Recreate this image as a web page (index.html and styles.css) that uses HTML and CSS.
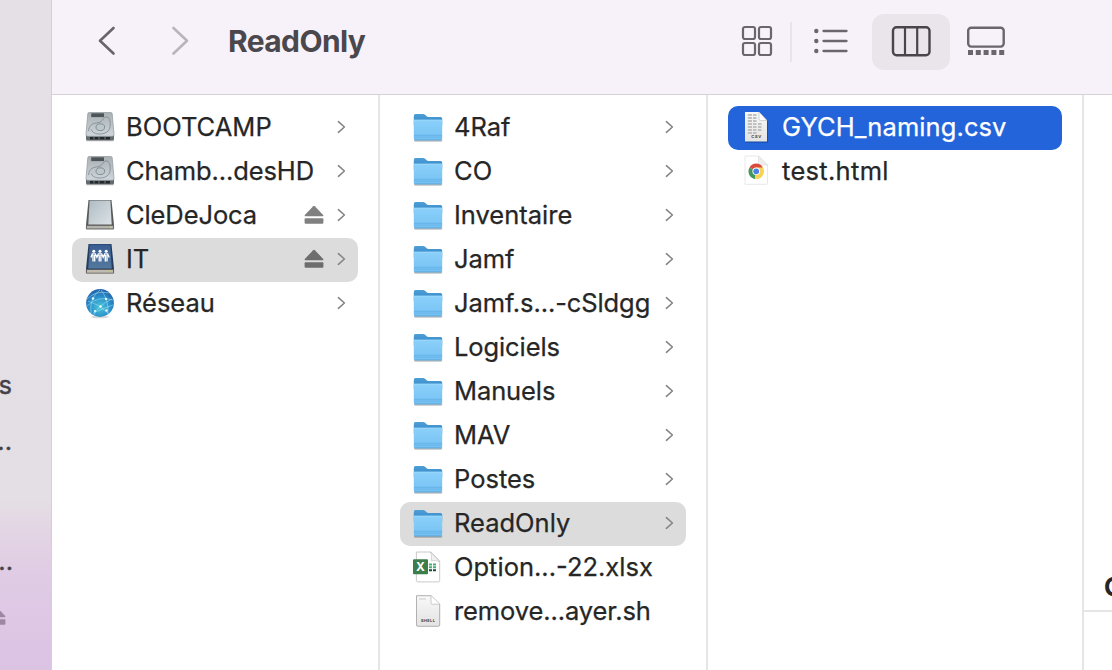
FILE: index.html
```html
<!DOCTYPE html>
<html lang="fr">
<head>
<meta charset="utf-8">
<title>ReadOnly</title>
<link rel="stylesheet" href="styles.css">
</head>
<body>
<svg class="defs" width="0" height="0" aria-hidden="true">
  <defs>
    <linearGradient id="gMetal" x1="0" y1="0" x2="0" y2="1"><stop offset="0" stop-color="#a9b1b5"/><stop offset="1" stop-color="#cfd7dc"/></linearGradient>
    <linearGradient id="gPlate" x1="0" y1="0" x2="1" y2="1"><stop offset="0" stop-color="#aebbc2"/><stop offset="1" stop-color="#dde3e8"/></linearGradient>
    <linearGradient id="gBlue" x1="0" y1="0" x2="0" y2="1"><stop offset="0" stop-color="#385c91"/><stop offset="1" stop-color="#54799f"/></linearGradient>
    <linearGradient id="gTab" x1="0" y1="0" x2="0" y2="1"><stop offset="0" stop-color="#4d9fd8"/><stop offset="1" stop-color="#3481c2"/></linearGradient>
    <linearGradient id="gFolder" x1="0" y1="0" x2="0" y2="1"><stop offset="0" stop-color="#8bd0fa"/><stop offset="1" stop-color="#75c1f3"/></linearGradient>
    <linearGradient id="gPaper" x1="0" y1="0" x2="0" y2="1"><stop offset="0" stop-color="#f8f8f8"/><stop offset="1" stop-color="#e3e3e3"/></linearGradient>
    <radialGradient id="gGlobe" cx=".5" cy=".65" r=".6"><stop offset="0" stop-color="#4cc3d8"/><stop offset=".65" stop-color="#2a8ecb"/><stop offset="1" stop-color="#2468ae"/></radialGradient>
  </defs>
  <symbol id="hdd" viewBox="0 0 32 32">
    <rect x="2" y="28.500" width="28" height="2" rx="1" fill="#000" opacity=".14"/>
    <path d="M2 23.500h28v4.500q0 1.500-1.500 1.500h-25q-1.500 0-1.500-1.500z" fill="#626b6f"/>
    <path d="M6 26h20v2.500h-20z" fill="#24282a"/>
    <path d="M10 26v2.500M15 26v2.500M21 26v2.500" stroke="#697175" stroke-width="1.200"/>
    <path d="M5.200 1.500h21.600q1.200 0 1.400 1.200l1.800 20.800q0 1.800-1.600 1.800h-24.800q-1.600 0-1.600-1.800l1.800-20.800q.2-1.200 1.400-1.200z" fill="url(#gMetal)" stroke="#8d969b" stroke-width=".7"/>
    <path d="M7.200 2.300h12.800v3.800h-12.800z" fill="#4e5458"/>
    <path d="M4.500 20c.5-5 3-7.500 8-8 4-.4 5.500-2 7-4.500 1.500-2.600 6-2 6.500 2.500.4 3.600.5 7-1.500 9.500-2 2.400-5 3.500-8.500 3.500-4.500 0-8-1.500-8.500-4.500" fill="none" stroke="#7b868b" stroke-width=".8"/>
    <ellipse cx="16.300" cy="16.200" rx="4.300" ry="3.400" fill="#bcc7cc" stroke="#7b868b" stroke-width=".9"/>
  </symbol>
  <symbol id="drive" viewBox="0 0 32 32">
    <path d="M2 27h28v4h-28z" fill="#000" opacity=".15"/>
    <path d="M4.500 1h23l2.500 25v3.500h-28v-3.500z" fill="#5a5a5b"/>
    <path d="M5.600 1.600h20.800l1.300 24h-23.400z" fill="url(#gPlate)"/>
    <path d="M2.400 26.500h27.200v3.400h-27.200z" fill="#b5b3ae" stroke="#5d5a57" stroke-width=".7"/>
    <rect x="26" y="27.600" width="1.500" height="1.300" fill="#c8dd8a"/>
  </symbol>
  <symbol id="share" viewBox="0 0 32 32">
    <path d="M4.500 1h23l2.500 25v3.500h-28v-3.500z" fill="#253c5d"/>
    <path d="M5.600 1.600h20.800l1.300 24h-23.400z" fill="url(#gBlue)"/>
    <path d="M2.400 26.500h27.200v3.700h-27.200z" fill="#bfbbb1" stroke="#514e4b" stroke-width=".7"/>
    <rect x="26" y="27.800" width="1.500" height="1.300" fill="#b7cc6a"/>
    <g fill="#fff"><circle cx="9.800" cy="8.200" r="1.500"/><circle cx="16" cy="8.200" r="1.500"/><circle cx="22.200" cy="8.200" r="1.500"/></g>
    <path d="M7 14.500l1.300-3.700h3l1.600 3.500 1.500-3.500h3.200l1.600 3.500 1.500-3.500h3l1.500 3.700M9 12v6.500M10.700 12v6.500M15.200 12v6.500M16.900 12v6.500M21.300 12v6.500M23 12v6.500" fill="none" stroke="#fff" stroke-width="1.350"/>
  </symbol>
  <symbol id="globe" viewBox="0 0 32 32">
    <ellipse cx="16" cy="30" rx="9" ry="1.300" fill="#000" opacity=".15"/>
    <circle cx="16" cy="16" r="13.900" fill="url(#gGlobe)"/>
    <path d="M3 12Q12 3 25 6M3 19Q14 8 29 13M7 26Q5 11 16 3M24 27Q25 13 17 3M4 14Q15 17 24 26M28 12Q13 19 10 28M9 26Q18 22 29 18" fill="none" stroke="#b5f0f7" stroke-width=".8" opacity=".6"/>
    <g fill="#e4ffff"><circle cx="9" cy="11.500" r="1.300"/><circle cx="22" cy="12" r="1.200"/><circle cx="16.500" cy="19.500" r="1.200"/><circle cx="11" cy="24" r="1.100"/><circle cx="22.500" cy="23.500" r="1.200"/></g>
  </symbol>
  <symbol id="folder" viewBox="0 0 32 32">
    <g transform="translate(0 .8)">
    <rect x="2" y="27" width="28.200" height="3" rx="1.200" fill="#000" opacity=".24"/>
    <path d="M1.800 4.300q0-2 1.700-2h7.500q1.300 0 2.400 1l1.200 1.200q.8.600 2 .6h12q1.600 0 1.600 1.600v7h-28.400z" fill="url(#gTab)"/>
    <path d="M1.800 9.300q0-1.300 1.300-1.300h25.800q1.300 0 1.300 1.300v17.700q0 1.500-1.500 1.500h-25.400q-1.500 0-1.500-1.500z" fill="url(#gFolder)"/>
    <path d="M2 8.400h28" stroke="#a1dcfd" stroke-width=".7"/>
    <path d="M2 23.600h28M2 25.400h28" stroke="#56a6dc" stroke-width=".7" opacity=".75"/>
    <path d="M2.500 28.200h27" stroke="#4d9acb" stroke-width=".7"/>
    </g>
  </symbol>
  <symbol id="xlsx" viewBox="0 0 32 32">
    <path d="M4.400 1h14.600l8.700 9v19.500q0 1.400-1.400 1.400h-20.500q-1.400 0-1.400-1.400z" fill="#fff" stroke="#bcbcbc" stroke-width=".8"/>
    <path d="M18.600 1q1.600 4 .7 8.800 4.500-1 8.400 1z" fill="#f1f1f1" stroke="#c5c5c5" stroke-width=".7"/>
    <path d="M17 13.500h3M21 13.500h3M17 16.300h3M21 16.300h3" stroke="#47ad77" stroke-width="1.900"/>
    <path d="M17 19.300h3M21 19.300h3" stroke="#124f36" stroke-width="1.900"/>
    <rect x="1" y="8.300" width="15" height="15" rx="1" fill="#3b7d4b"/>
    <text class="xlsx-mark" x="8.500" y="20">X</text>
  </symbol>
  <symbol id="shell" viewBox="0 0 32 32">
    <path d="M4.500 .7h14.700l8.500 8.500v20.800q0 1.300-1.300 1.300h-20.600q-1.300 0-1.300-1.300z" fill="url(#gPaper)" stroke="#a8a8a8" stroke-width=".9"/>
    <path d="M19 .9v6.800q0 1.500 1.500 1.500h7" fill="#fff" stroke="#bbb" stroke-width=".8"/>
    <path d="M7 4h7" stroke="#bbb" stroke-width=".7"/>
    <text class="doc-mark" x="16" y="26.900" textLength="14">SHELL</text>
  </symbol>
  <symbol id="csv" viewBox="0 0 32 32">
    <path d="M4.500 1.200h15l8 8.300v21.500h-23z" fill="#103c87" opacity=".6" transform="translate(.6 .8)"/>
    <path d="M5 1h14l8 8.500v21h-22z" fill="url(#gPaper)"/>
    <path d="M19 1v7q0 1.500 1.500 1.500h6.500z" fill="#fff" stroke="#bbb" stroke-width=".6"/>
    <path d="M7.800 4h4.200M13 4h3.500M7.800 7h4.200M13 7h3.500M7.800 10h4.200M13 10h3.500M7.800 13h4.200M13 13h3.500M18 13h3.500M7.800 16h4.200M13 16h3.500M18 16h3.500M7.800 19h4.200M13 19h3.500M18 19h3.500M7.800 22h4.200M13 22h3.500" stroke="#c0c0c0" stroke-width="1.900"/>
    <text class="doc-mark" x="16.300" y="26.900" textLength="10">CSV</text>
  </symbol>
  <symbol id="html" viewBox="0 0 32 32">
    <path d="M5 1h13.500l9 9v18.500q0 .8-.8.800h-21.700z" fill="#fff" stroke="#e2e2e2" stroke-width=".8"/>
    <path d="M18.500 1v7.500q0 1.500 1.500 1.500h7.500z" fill="#eee" stroke="#d8d8d8" stroke-width=".6"/>
    <path d="M16.200 16.300L9.500 12.400a7.800 7.800 0 0 1 13.400 0z" fill="#d94b3f"/>
    <path d="M16.200 16.300l-6.700-3.900a7.800 7.800 0 0 0 5.500 11.600z" fill="#41985a"/>
    <path d="M16.200 16.300l-1.200 7.700a7.800 7.800 0 0 0 7.900-11.600h-6.700z" fill="#f7d255"/>
    <circle cx="16.200" cy="16.300" r="3.800" fill="#fff"/><circle cx="16.200" cy="16.300" r="2.900" fill="#4a80e8"/>
  </symbol>
  <symbol id="chev" viewBox="0 0 10 14"><path d="M2.400 1.700l6 5.300-6 5.300" fill="none" stroke="#858585" stroke-width="1.600" stroke-linecap="round" stroke-linejoin="round"/></symbol>
  <symbol id="eject" viewBox="0 0 20 20"><path d="M9.200 1.200q.8-.8 1.600 0l8.400 8.700q.7 1.300-.7 1.300h-17q-1.400 0-.7-1.300z"/><rect x=".6" y="13.200" width="18.800" height="5.500" rx="1"/></symbol>
</svg>

<div class="window">
  <aside class="sidebar">
    <div class="side-item">s</div>
    <div class="side-item side-item-dots">..</div>
    <div class="side-item side-item-last">..</div>
    <svg class="side-eject" width="20" height="20"><use href="#eject"/></svg>
  </aside>
  <main class="main">
    <header class="toolbar">
      <svg class="nav-back" width="20" height="30" viewBox="0 0 20 30"><path d="M16.500 2L3 14.800 16.500 27.500" fill="none" stroke="#69646b" stroke-width="2.600" stroke-linecap="round" stroke-linejoin="round"/></svg>
      <svg class="nav-next" width="20" height="30" viewBox="0 0 20 30"><path d="M3.500 2L17 14.800 3.500 27.500" fill="none" stroke="#b9b4bb" stroke-width="2.600" stroke-linecap="round" stroke-linejoin="round"/></svg>
      <h1 class="title">ReadOnly</h1>
      <div class="views">
        <svg class="view-grid" width="32" height="32" viewBox="0 0 32 32"><g fill="none" stroke="#6b666d" stroke-width="2.200"><rect x="2" y="2" width="12" height="12" rx="2"/><rect x="18" y="2" width="12" height="12" rx="2"/><rect x="2" y="18" width="12" height="12" rx="2"/><rect x="18" y="18" width="12" height="12" rx="2"/></g></svg>
        <span class="divider"></span>
        <svg class="view-list" width="36" height="30" viewBox="0 0 36 30"><g fill="#6b666d"><circle cx="3.300" cy="5" r="2.200"/><circle cx="3.300" cy="15" r="2.200"/><circle cx="3.300" cy="25" r="2.200"/></g><path d="M10.500 5h23M10.500 15h23M10.500 25h23" stroke="#6b666d" stroke-width="2.300" stroke-linecap="round"/></svg>
        <span class="view-active"><svg width="40" height="32" viewBox="0 0 40 32"><rect x="2" y="2.200" width="36.500" height="28" rx="3.500" fill="none" stroke="#49464b" stroke-width="2.400"/><path d="M14 2v28M26.200 2v28" stroke="#49464b" stroke-width="2.200"/></svg></span>
        <svg class="view-gallery" width="40" height="32" viewBox="0 0 40 32"><rect x="2.200" y="1.800" width="35.500" height="18.800" rx="3" fill="none" stroke="#6b666d" stroke-width="2.400"/><path d="M2 26.500h36.500" stroke="#6b666d" stroke-width="5" stroke-dasharray="5 2.800"/></svg>
      </div>
    </header>
    <div class="columns">
      <section class="column">
        <div class="row"><svg class="icon"><use href="#hdd"/></svg><span class="name">BOOTCAMP</span><svg class="chev"><use href="#chev"/></svg></div>
        <div class="row"><svg class="icon"><use href="#hdd"/></svg><span class="name name-tight">Chamb...desHD</span><svg class="chev"><use href="#chev"/></svg></div>
        <div class="row"><svg class="icon"><use href="#drive"/></svg><span class="name name-tight">CleDeJoca</span><svg class="eject"><use href="#eject"/></svg><svg class="chev"><use href="#chev"/></svg></div>
        <div class="row row-open"><svg class="icon"><use href="#share"/></svg><span class="name">IT</span><svg class="eject"><use href="#eject"/></svg><svg class="chev"><use href="#chev"/></svg></div>
        <div class="row"><svg class="icon"><use href="#globe"/></svg><span class="name">Réseau</span><svg class="chev"><use href="#chev"/></svg></div>
      </section>
      <section class="column">
        <div class="row"><svg class="icon"><use href="#folder"/></svg><span class="name">4Raf</span><svg class="chev"><use href="#chev"/></svg></div>
        <div class="row"><svg class="icon"><use href="#folder"/></svg><span class="name">CO</span><svg class="chev"><use href="#chev"/></svg></div>
        <div class="row"><svg class="icon"><use href="#folder"/></svg><span class="name">Inventaire</span><svg class="chev"><use href="#chev"/></svg></div>
        <div class="row"><svg class="icon"><use href="#folder"/></svg><span class="name name-tight">Jamf</span><svg class="chev"><use href="#chev"/></svg></div>
        <div class="row"><svg class="icon"><use href="#folder"/></svg><span class="name name-tight">Jamf.s...-cSldgg</span><svg class="chev"><use href="#chev"/></svg></div>
        <div class="row"><svg class="icon"><use href="#folder"/></svg><span class="name name-tight">Logiciels</span><svg class="chev"><use href="#chev"/></svg></div>
        <div class="row"><svg class="icon"><use href="#folder"/></svg><span class="name name-tight">Manuels</span><svg class="chev"><use href="#chev"/></svg></div>
        <div class="row"><svg class="icon"><use href="#folder"/></svg><span class="name name-tight">MAV</span><svg class="chev"><use href="#chev"/></svg></div>
        <div class="row"><svg class="icon"><use href="#folder"/></svg><span class="name">Postes</span><svg class="chev"><use href="#chev"/></svg></div>
        <div class="row row-open"><svg class="icon"><use href="#folder"/></svg><span class="name">ReadOnly</span><svg class="chev"><use href="#chev"/></svg></div>
        <div class="row"><svg class="icon"><use href="#xlsx"/></svg><span class="name">Option...-22.xlsx</span></div>
        <div class="row"><svg class="icon"><use href="#shell"/></svg><span class="name name-tight">remove...ayer.sh</span></div>
      </section>
      <section class="column column-files">
        <div class="row row-selected"><svg class="icon"><use href="#csv"/></svg><span class="name name-wide">GYCH_naming.csv</span></div>
        <div class="row"><svg class="icon"><use href="#html"/></svg><span class="name name-wider">test.html</span></div>
      </section>
      <section class="preview"><div class="preview-name">G</div></section>
    </div>
  </main>
</div>
</body>
</html>
```
FILE: styles.css
```css
* { box-sizing: border-box; }
body {
  margin: 0;
  overflow: hidden;
  font-family: Inter, "Liberation Sans", sans-serif;
  font-size: 25.5px;
  color: #262626;
  background: #fff;
}
.defs { position: absolute; }
svg { flex: none; display: block; }
.window { display: flex; width: 1112px; height: 670px; }

.sidebar {
  width: 52px;
  flex: none;
  display: flex;
  flex-direction: column;
  align-items: flex-end;
  padding: 369px 39px 0 0;
  overflow: hidden;
  border-right: 1px solid #d3cfd4;
  background: linear-gradient(#e5e0e6 0, #e4dfe4 500px, #e4d8e4 520px, #e0cce4 570px, #dec8e5 610px, #dbc3e3 670px);
}
.side-item {
  height: 32px;
  line-height: 32px;
  flex: none;
  white-space: nowrap;
  color: #454247;
  -webkit-text-stroke: 0.4px currentColor;
}
.side-item-dots { margin-top: 24px; }
.side-item-last { margin: 88px -1px 0 0; }
.side-eject { margin: 29px 6px 0 0; fill: #9d88a3; }

.main { flex: 1; min-width: 0; display: flex; flex-direction: column; }
.toolbar {
  height: 95px;
  flex: none;
  display: flex;
  align-items: flex-start;
  padding: 26px 106px 0 45px;
  background: #f7f2f9;
  border-bottom: 1px solid #d6d2d7;
}
.nav-next { margin-left: 53px; }
.title {
  margin: 0 0 0 38px;
  font-size: 30px;
  line-height: 31px;
  font-weight: 700;
  letter-spacing: -0.6px;
  color: #4b484d;
}
.views { display: flex; align-items: center; height: 56px; margin: -12px 0 0 auto; }
.view-grid { margin-top: -2px; }
.divider { width: 2px; height: 40px; margin: 0 21px 0 17px; background: #e9e4eb; }
.view-list { margin-top: -2px; }
.view-active {
  width: 78px;
  height: 56px;
  margin: 0 16px 0 23px;
  display: flex;
  align-items: center;
  justify-content: center;
  padding-bottom: 3px;
  border-radius: 12px;
  background: #eae5eb;
}

.columns { flex: 1; min-height: 0; display: flex; }
.column { width: 328px; flex: none; padding: 11px 20px 0; border-right: 2px solid #e5e5e5; }
.column-files { width: 376px; }
.row { height: 44px; display: flex; align-items: center; padding: 0 12px; border-radius: 10px; }
.row-open { background: #dcdcdc; }
.row-selected { background: #2464db; color: #fff; }
.icon { width: 32px; height: 32px; margin: -2px 10px 0 0; }
.name {
  flex: 1;
  min-width: 0;
  white-space: nowrap;
  line-height: 32px;
  margin-top: -2px;
  -webkit-text-stroke: 0.25px currentColor;
}
.name-tight { letter-spacing: -0.1px; }
.name-wide { letter-spacing: 0.08px; }
.name-wider { letter-spacing: 0.3px; }
.chev { width: 10px; height: 14px; margin: -2px 0 0 10px; }
.eject { width: 20px; height: 20px; fill: #808080; margin: -3px 2px 0 0; }
.row-open .eject { fill: #6d6d6d; }
.preview { flex: 1; min-width: 0; overflow: hidden; }
.preview-name { height: 517px; padding: 475px 0 0 20px; line-height: 34px; font-weight: 700; border-bottom: 2px solid #e5e5e5; }

.doc-mark { font: 700 4px Inter, sans-serif; fill: #444; text-anchor: middle; }
.xlsx-mark { font: 700 12px Inter, sans-serif; fill: #fff; text-anchor: middle; }
```
